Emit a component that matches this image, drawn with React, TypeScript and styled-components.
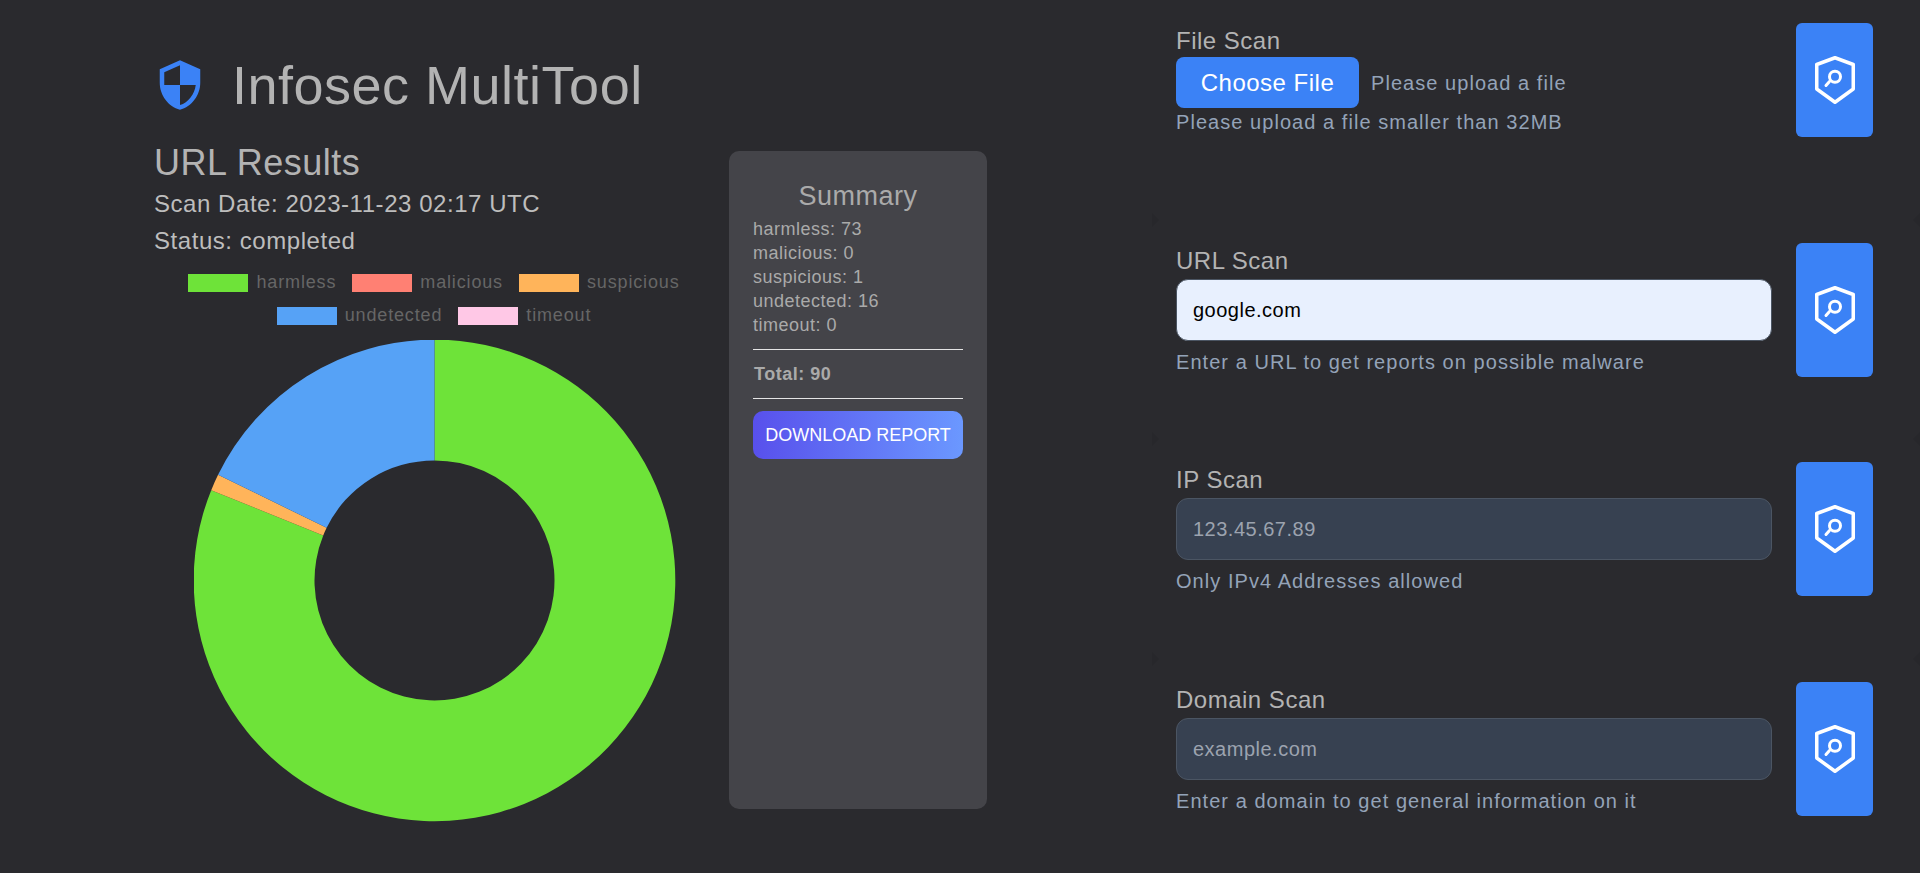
import React from "react";
import { MdSecurity } from "react-icons/md";
import styled, { createGlobalStyle } from "styled-components";

const GlobalStyle = createGlobalStyle`
  html, body {
    margin: 0;
    padding: 0;
    height: 100%;
    overflow: hidden;
    background-color: #2a2a2e;
  }
  * {
    box-sizing: border-box;
  }
  body {
    font-family: "Liberation Sans", Arial, sans-serif;
    letter-spacing: 0.5px;
  }
`;

type Slice = { label: string; value: number; color: string };

const slices: Slice[] = [
  { label: "harmless", value: 73, color: "#6ee339" },
  { label: "malicious", value: 0, color: "#ff8073" },
  { label: "suspicious", value: 1, color: "#ffb45a" },
  { label: "undetected", value: 16, color: "#56a2f6" },
  { label: "timeout", value: 0, color: "#ffc8e6" },
];

const total = slices.reduce((sum, s) => sum + s.value, 0);

const point = (radius: number, angle: number) => {
  const rad = ((angle - 90) * Math.PI) / 180;
  return `${240.5 + radius * Math.cos(rad)} ${240.4 + radius * Math.sin(rad)}`;
};

const arcPath = (start: number, end: number) => {
  const outer = 240.8;
  const inner = 120;
  const large = end - start > 180 ? 1 : 0;
  return [
    `M ${point(outer, start)}`,
    `A ${outer} ${outer} 0 ${large} 1 ${point(outer, end)}`,
    `L ${point(inner, end)}`,
    `A ${inner} ${inner} 0 ${large} 0 ${point(inner, start)}`,
    "Z",
  ].join(" ");
};

const Donut = () => {
  let angle = 0;
  return (
    <ChartSvg viewBox="0 0 482 482">
      {slices
        .filter((s) => s.value > 0)
        .map((s) => {
          const start = angle;
          angle += (s.value / total) * 360;
          return <path key={s.label} d={arcPath(start, angle)} fill={s.color} />;
        })}
    </ChartSvg>
  );
};

const ShieldSearch = () => (
  <svg width="44" height="52" viewBox="0 0 44 52" fill="none" stroke="#fff" strokeWidth="3.5" strokeLinejoin="round" strokeLinecap="round">
    <path d="M22 3.75 L40.25 10.5 V35 L22 48.25 L3.75 35 V10.5 Z" />
    <circle cx="22" cy="22.7" r="5.5" strokeWidth="3" />
    <path d="M16.3 27.7 L13 31.5" strokeWidth="3" />
  </svg>
);

const scans = [
  { label: "URL Scan", placeholder: "", value: "google.com", hint: "Enter a URL to get reports on possible malware" },
  { label: "IP Scan", placeholder: "123.45.67.89", hint: "Only IPv4 Addresses allowed" },
  { label: "Domain Scan", placeholder: "example.com", hint: "Enter a domain to get general information on it" },
];

const App = () => {
  return (
    <Page>
      <GlobalStyle />
      <LeftPane>
        <Header>
          <MdSecurity size={54} color="#3b82f6" />
          <Title>Infosec MultiTool</Title>
        </Header>
        <Results>
          <ChartColumn>
            <ResultsTitle>URL Results</ResultsTitle>
            <Meta>Scan Date: 2023-11-23 02:17 UTC</Meta>
            <Meta>Status: completed</Meta>
            <Legend>
              <LegendRow>
                {slices.slice(0, 3).map((s) => (
                  <LegendItem key={s.label}>
                    <Swatch $color={s.color} />
                    {s.label}
                  </LegendItem>
                ))}
              </LegendRow>
              <LegendRow>
                {slices.slice(3).map((s) => (
                  <LegendItem key={s.label}>
                    <Swatch $color={s.color} />
                    {s.label}
                  </LegendItem>
                ))}
              </LegendRow>
            </Legend>
            <Donut />
          </ChartColumn>
          <SummaryCard>
            <SummaryTitle>Summary</SummaryTitle>
            {slices.map((s) => (
              <SummaryLine key={s.label}>
                {s.label}: {s.value}
              </SummaryLine>
            ))}
            <TotalLine>Total: {total}</TotalLine>
            <DownloadButton>DOWNLOAD REPORT</DownloadButton>
          </SummaryCard>
        </Results>
      </LeftPane>
      <RightPane>
        <ScanRow>
          <RowBody>
            <Field>
              <FieldLabel $tight>File Scan</FieldLabel>
              <FileRow>
                <ChooseButton>Choose File</ChooseButton>
                <Hint>Please upload a file</Hint>
              </FileRow>
              <Hint>Please upload a file smaller than 32MB</Hint>
            </Field>
            <ScanButton aria-label="Scan file">
              <ShieldSearch />
            </ScanButton>
          </RowBody>
        </ScanRow>
        {scans.map((s) => (
          <ScanRow key={s.label}>
            <RowBody>
              <Field>
                <FieldLabel>{s.label}</FieldLabel>
                <TextInput $filled={!!s.value} defaultValue={s.value} placeholder={s.placeholder} />
                <InputHint>{s.hint}</InputHint>
              </Field>
              <ScanButton aria-label={s.label}>
                <ShieldSearch />
              </ScanButton>
            </RowBody>
          </ScanRow>
        ))}
      </RightPane>
    </Page>
  );
};

export default App;

const Page = styled.div`
  display: grid;
  grid-template-columns: 1152px 768px;
  width: 1920px;
  height: 873px;
  overflow: hidden;
  background-color: #2a2a2e;
`;

const LeftPane = styled.div`
  padding: 58px 0 0 154px;
`;

const Header = styled.div`
  display: flex;
  align-items: center;
  gap: 25px;
  height: 54px;

  svg {
    margin-left: -1px;
  }
`;

const Title = styled.h1`
  margin: 0;
  font-size: 54px;
  font-weight: 400;
  line-height: 54px;
  color: #b3b3b3;
`;

const Results = styled.div`
  display: flex;
  align-items: flex-start;
  gap: 14px;
  margin-top: 30px;
`;

const ChartColumn = styled.div`
  display: flex;
  flex-direction: column;
  width: 561px;
`;

const ResultsTitle = styled.h2`
  margin: 0 0 4px;
  padding-top: 1px;
  height: 40px;
  font-size: 36px;
  font-weight: 400;
  line-height: 40px;
  color: #b3b3b3;
`;

const Meta = styled.div`
  font-size: 24px;
  line-height: 36px;
  letter-spacing: 0.55px;
  color: #bdbdbd;

  & + & {
    padding-top: 1px;
  }
`;

const Legend = styled.div`
  display: flex;
  flex-direction: column;
  gap: 15px;
  margin: 15px 1px 0 0;
`;

const LegendRow = styled.div`
  display: flex;
  justify-content: center;
  gap: 16px;
`;

const LegendItem = styled.div`
  display: flex;
  align-items: center;
  gap: 8px;
  height: 18px;
  padding-bottom: 1px;
  font-size: 18px;
  letter-spacing: 0.85px;
  color: #666;
`;

const Swatch = styled.span<{ $color: string }>`
  width: 60px;
  height: 18px;
  margin-bottom: -1px;
  background-color: ${(p) => p.$color};
`;

const ChartSvg = styled.svg`
  display: block;
  align-self: center;
  width: 482px;
  height: 482px;
  margin-top: 15px;
`;

const SummaryCard = styled.div`
  display: flex;
  flex-direction: column;
  width: 258px;
  height: 658px;
  margin-top: 9px;
  padding: 27px 24px;
  border-radius: 10px;
  background-color: #444449;
`;

const SummaryTitle = styled.h3`
  margin: 0 0 3px;
  font-size: 27px;
  font-weight: 400;
  line-height: 36px;
  text-align: center;
  color: #aaa;
`;

const SummaryLine = styled.div`
  font-size: 18px;
  line-height: 24px;
  color: #aaa;
`;

const TotalLine = styled.div`
  margin-top: 12px;
  padding: 12px 0 12px 1px;
  border-top: 1px solid #e5e5e5;
  border-bottom: 1px solid #e5e5e5;
  font-size: 18px;
  font-weight: 700;
  line-height: 24px;
  color: #aaa;
`;

const DownloadButton = styled.button`
  height: 48px;
  margin-top: 12px;
  padding: 0;
  border: none;
  border-radius: 10px;
  background: linear-gradient(90deg, #5850ec, #6b98ff);
  font-family: inherit;
  font-size: 18px;
  letter-spacing: 0;
  color: #fff;
  cursor: pointer;
`;

const RightPane = styled.div`
  display: flex;
  flex-direction: column;
`;

const ScanRow = styled.div`
  position: relative;
  height: 219.5px;
  padding: 23px 47px 0 24px;

  &:not(:last-child)::before,
  &:not(:last-child)::after {
    content: "";
    position: absolute;
    bottom: -7px;
    border-top: 7px solid transparent;
    border-bottom: 7px solid transparent;
  }
  &:not(:last-child)::before {
    left: 0;
    border-left: 7px solid #27272b;
  }
  &:not(:last-child)::after {
    right: 0;
    border-right: 7px solid #27272b;
  }
`;

const RowBody = styled.div`
  display: flex;
  gap: 24px;
`;

const Field = styled.div`
  display: flex;
  flex-direction: column;
  flex: 1;
  padding-bottom: 1px;
`;

const FieldLabel = styled.label<{ $tight?: boolean }>`
  height: ${(p) => (p.$tight ? "34px" : "36px")};
  font-size: 24px;
  line-height: 36px;
  color: #b3b3b3;
`;

const FileRow = styled.div`
  display: flex;
  align-items: center;
  gap: 12px;
`;

const ChooseButton = styled.button`
  width: 183px;
  height: 51px;
  padding: 0;
  border: none;
  border-radius: 8px;
  background-color: #3b82f6;
  font-family: inherit;
  font-size: 24px;
  letter-spacing: 0.5px;
  color: #fff;
  cursor: pointer;
`;

const Hint = styled.div`
  font-size: 20px;
  line-height: 28px;
  letter-spacing: 1.05px;
  color: #94a3b8;
`;

const InputHint = styled(Hint)`
  margin-top: 7px;
`;

const TextInput = styled.input<{ $filled?: boolean }>`
  width: 100%;
  height: 62px;
  padding: 1px 16px 0;
  border: 1px solid #4b5563;
  border-radius: 12px;
  background-color: ${(p) => (p.$filled ? "#e8f0fe" : "#374151")};
  font-family: inherit;
  font-size: 20px;
  letter-spacing: 0.5px;
  color: #000;
  outline: none;

  &::placeholder {
    color: #9ca3af;
    opacity: 1;
  }
`;

const ScanButton = styled.button`
  display: flex;
  align-items: center;
  justify-content: center;
  width: 77px;
  padding: 0;
  border: none;
  border-radius: 6px;
  background-color: #3b82f6;
  cursor: pointer;
`;
